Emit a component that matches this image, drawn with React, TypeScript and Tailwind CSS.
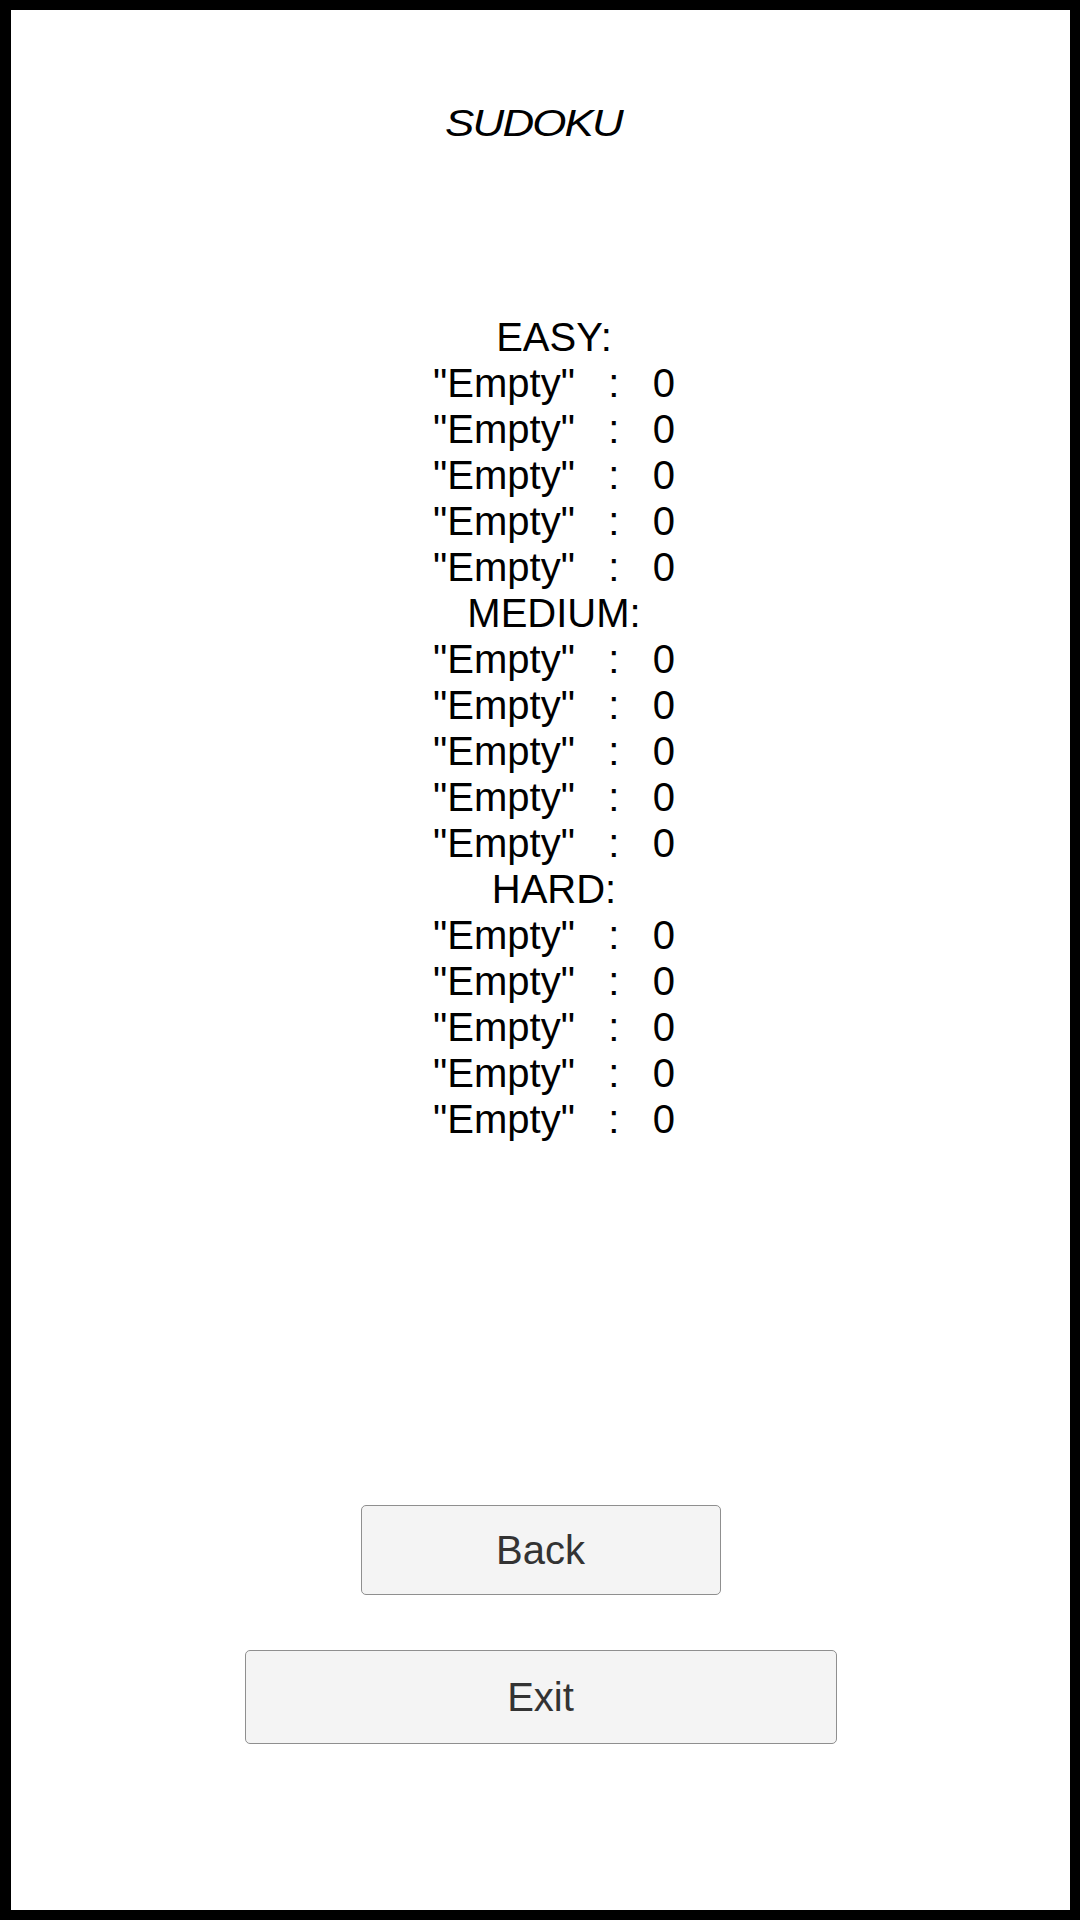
const FONT = "font-['Liberation_Sans',Arial,sans-serif]";

const SECTIONS = [
  { title: "EASY:", scores: [0, 0, 0, 0, 0] },
  { title: "MEDIUM:", scores: [0, 0, 0, 0, 0] },
  { title: "HARD:", scores: [0, 0, 0, 0, 0] },
];

const BTN_CLS =
  "flex items-center justify-center rounded-[5px] border border-[#8f8f8f] bg-[#f4f4f4] text-[40px] text-[#333333]";

export default function App() {
  return (
    <div className={`h-[1920px] w-[1080px] bg-black pb-[10px] pl-[11px] pr-[10px] pt-[10px] ${FONT}`}>
      <div className="flex h-full flex-col items-center bg-white">
        {/* ─── Title ─────────────────────────────────────────── */}
        <h1 className="mt-[96px] origin-center -translate-x-[7px] scale-x-[1.22] text-[36px] leading-[36px] tracking-[-1.5px] italic text-black">
          SUDOKU
        </h1>

        {/* ─── High scores ───────────────────────────────────── */}
        <div className="mt-[172px] flex flex-col items-center pl-[27px] text-[40px] leading-[46px] text-black">
          {SECTIONS.map((s) => (
            <div key={s.title} className="flex flex-col items-center">
              <p>{s.title}</p>
              {s.scores.map((score, i) => (
                <p key={i} className="whitespace-pre">
                  {`"Empty"   :   ${score}`}
                </p>
              ))}
            </div>
          ))}
        </div>

        {/* ─── Buttons ───────────────────────────────────────── */}
        <button type="button" className={`${BTN_CLS} mt-[363px] h-[90px] w-[360px]`}>
          Back
        </button>
        <button type="button" className={`${BTN_CLS} mt-[55px] h-[94px] w-[592px]`}>
          Exit
        </button>
      </div>
    </div>
  );
}
